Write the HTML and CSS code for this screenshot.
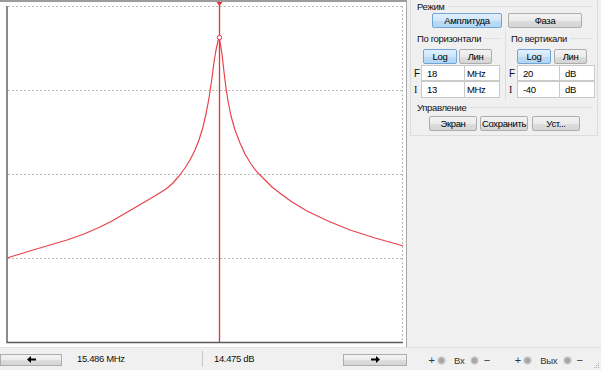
FILE: index.html
```html
<!DOCTYPE html>
<html>
<head>
    <meta charset="utf-8">
    <title>АЧХ</title>
    <link rel="stylesheet" href="styles.css">
</head>
<body>
    <div class="app">
        <div class="plot">
            <svg class="chart" width="406" height="345" viewBox="0 2 406 345">
                <g class="grid">
                    <line x1="8" y1="6.5" x2="402" y2="6.5"/>
                    <line x1="8" y1="90.5" x2="402" y2="90.5"/>
                    <line x1="8" y1="174.5" x2="402" y2="174.5"/>
                    <line x1="8" y1="258.5" x2="402" y2="258.5"/>
                    <line x1="402.5" y1="6" x2="402.5" y2="342"/>
                </g>
                <path class="axis-line" d="M7 6 V342.5 H403"/>
                <line class="marker" x1="219.5" y1="2" x2="219.5" y2="342"/>
                <path class="marker-head" d="M216.5 2 H222.5 L219.5 6 Z"/>
                <polyline class="curve" points="7,258 20,254 33,250 50,245 67,240 84,234 100,227 112,221 124,214 136,207 148,200 158,194 166,189 173,183 179,176 185,168 190,160 195,150 199,140 203,127 206,114 209,98 212,78 214,62 216,50 218,41 219,38 220,42 222,54 224,72 226,88 228,101 231,116 235,130 240,143 245,154 251,164 257,172 264,179 272,187 281,194 292,202 307,211 328,221 350,230 375,238 400,245 403,246"/>
                <circle class="peak" cx="219.5" cy="37.5" r="2.2"/>
            </svg>
        </div>

        <div class="side">
            <div class="panel">
                <div class="legend">Режим</div>
                <div class="mode-row">
                    <button class="btn on amp">Амплитуда</button>
                    <button class="btn phase">Фаза</button>
                </div>

                <div class="axes">
                    <div class="axis">
                        <div class="legend">По горизонтали</div>
                        <div class="scale-row">
                            <button class="btn on sc">Log</button>
                            <button class="btn sc">Лин</button>
                        </div>
                        <div class="field-row">
                            <span class="fl">F</span>
                            <input class="val" value="18">
                            <input class="unit" value="MHz">
                        </div>
                        <div class="field-row">
                            <span class="fl serif">I</span>
                            <input class="val" value="13">
                            <input class="unit" value="MHz">
                        </div>
                    </div>
                    <div class="axis right">
                        <div class="legend">По вертикали</div>
                        <div class="scale-row">
                            <button class="btn on sc">Log</button>
                            <button class="btn sc">Лин</button>
                        </div>
                        <div class="field-row">
                            <span class="fl">F</span>
                            <input class="val" value="20">
                            <input class="unit" value="dB">
                        </div>
                        <div class="field-row">
                            <span class="fl serif">I</span>
                            <input class="val" value="-40">
                            <input class="unit" value="dB">
                        </div>
                    </div>
                </div>

                <div class="legend">Управление</div>
                <div class="ctrl-row">
                    <button class="btn ctl">Экран</button>
                    <button class="btn ctl">Сохранить</button>
                    <button class="btn ctl">Уст...</button>
                </div>
            </div>
        </div>

        <div class="status">
            <button class="btn nav left">
                <svg width="9" height="7" viewBox="0 0 9 7"><path d="M0 3.5 L4 0 V2.5 H9 V4.5 H4 V7 Z"/></svg>
            </button>
            <div class="cell first">15.486 MHz</div>
            <div class="cell second">14.475 dB</div>
            <button class="btn nav right">
                <svg width="9" height="7" viewBox="0 0 9 7"><path d="M9 3.5 L5 0 V2.5 H0 V4.5 H5 V7 Z"/></svg>
            </button>
            <div class="knobs">
                <span class="sign">+</span><span class="knob"></span><span class="kl">Вх</span><span class="knob"></span><span class="sign">−</span>
            </div>
            <div class="knobs out">
                <span class="sign">+</span><span class="knob"></span><span class="kl">Вых</span><span class="knob"></span><span class="sign">−</span>
            </div>
            <svg class="grip" width="7" height="7" viewBox="0 0 7 7">
                <rect x="5" y="1" width="1" height="1"/>
                <rect x="3" y="3" width="1" height="1"/>
                <rect x="5" y="3" width="1" height="1"/>
                <rect x="1" y="5" width="1" height="1"/>
                <rect x="3" y="5" width="1" height="1"/>
                <rect x="5" y="5" width="1" height="1"/>
            </svg>
        </div>
    </div>
</body>
</html>
```

FILE: styles.css
```css
body {
    margin: 0;
    background-color: #f0f0f0;
    font-family: "Liberation Sans", Arial, sans-serif;
    font-size: 9.5px;
    letter-spacing: -0.35px;
    color: #111;
}
.app {
    display: grid;
    grid-template-columns: 408px 193px;
    grid-template-rows: 347px 23px;
    width: 601px;
    height: 370px;
    overflow: hidden;
}
.plot {
    background-color: #fff;
    border-top: 2px solid #9c9c9c;
    border-right: 1px solid #a8a8a8;
    width: 406px;
    height: 345px;
}
.chart {
    display: block;
}
.grid line {
    stroke: #b9b9b9;
    stroke-width: 1;
    stroke-dasharray: 2 2;
}
.axis-line {
    fill: none;
    stroke: #5a5a5a;
    stroke-width: 1.4;
}
.marker {
    stroke: #e5323b;
    stroke-width: 1.3;
}
.marker-head {
    fill: #e5323b;
}
.curve {
    fill: none;
    stroke: #e8434b;
    stroke-width: 1.2;
    stroke-linejoin: round;
}
.peak {
    fill: #fff;
    stroke: #e5323b;
    stroke-width: 1;
}

/* right panel */
.side {
    padding: 0 3px 0 2px;
}
.panel {
    height: 136px;
    box-sizing: border-box;
    border: 1px solid #dcdcdc;
    border-top: none;
    display: flex;
    flex-direction: column;
}
.legend {
    display: flex;
    align-items: center;
    height: 12px;
    padding-left: 6px;
    white-space: nowrap;
}
.legend::after {
    content: "";
    flex: 1;
    border-top: 1px solid #dedede;
    margin: 1px 4px 0 3px;
}
.btn {
    font: inherit;
    letter-spacing: inherit;
    color: #000;
    height: 15px;
    padding: 0;
    margin: 0;
    box-sizing: border-box;
    border: 1px solid #adadad;
    border-radius: 2px;
    background: linear-gradient(#f3f3f3, #ebebeb 50%, #dedede 51%, #d4d4d4);
    line-height: 13px;
}
.btn.on {
    border-color: #6fa6d6;
    background: linear-gradient(#e2f0fc, #cfe6fa 50%, #bcdcf6 51%, #b2d6f4);
}
.mode-row {
    display: flex;
    gap: 6px;
    margin: 1px 0 0 21px;
}
.amp {
    width: 70px;
}
.phase {
    width: 74px;
}
.axes {
    display: grid;
    grid-template-columns: 94px 1fr;
    margin-top: 4px;
    height: 68px;
}
.axis.right {
    border-left: 1px solid #dcdcdc;
}
.axis .legend {
    padding-left: 6px;
}
.axis.right .legend {
    padding-left: 5px;
}
.scale-row {
    display: flex;
    gap: 2px;
    margin: 5px 0 0 12px;
}
.axis.right .scale-row {
    margin-left: 11px;
    gap: 3px;
}
.sc {
    width: 34px;
}
.sc + .sc {
    width: 33px;
}
.field-row {
    display: flex;
    align-items: center;
    height: 16px;
    padding-left: 3px;
}
.scale-row + .field-row {
    margin-top: 1px;
}
.axis.right .field-row {
    padding-left: 3px;
}
.fl {
    width: 7px;
    font-size: 10px;
}
.fl.serif {
    font-family: "Liberation Serif", serif;
}
.val, .unit {
    font: inherit;
    letter-spacing: inherit;
    color: #000;
    height: 16px;
    box-sizing: border-box;
    border: 1px solid #c9c9c9;
    background-color: #fff;
    margin: 0;
    padding: 0 0 0 5px;
}
.val {
    width: 44px;
}
.axis.right .val {
    width: 43px;
}
.axis.right .fl {
    width: 8px;
}
.unit {
    width: 36px;
    margin-left: -1px;
    padding-left: 2px;
}
.axis.right .unit {
    padding-left: 5px;
}
.field-row + .field-row .val,
.field-row + .field-row .unit {
    height: 17px;
}
.axes + .legend {
    margin-top: 1px;
}
.ctrl-row {
    display: flex;
    gap: 3px;
    margin: 3px 0 0 18px;
}
.ctl {
    width: 48px;
}
.ctl:last-child {
    margin-left: 1px;
}

/* bottom bar */
.status {
    grid-column: 1 / -1;
    display: flex;
    align-items: center;
    border-top: 1px solid #e2e2e2;
    position: relative;
}
.nav {
    height: 12px;
    border-radius: 0;
    display: flex;
    align-items: center;
    justify-content: center;
}
.nav svg {
    fill: #000;
}
.nav.left {
    width: 62px;
    margin-top: 1px;
}
.nav.right {
    width: 64px;
    margin-left: 1px;
    margin-top: 1px;
}
.cell {
    height: 16px;
    line-height: 16px;
    box-sizing: border-box;
}
.cell.first {
    width: 141px;
    padding-left: 15px;
    border-right: 1px solid #c6c6c6;
}
.cell.second {
    width: 139px;
    padding-left: 11px;
}
.knobs {
    display: flex;
    align-items: center;
    margin-left: 21px;
    margin-top: 2px;
    color: #333;
}
.knobs.out {
    margin-left: 24px;
}
.sign {
    width: 7px;
    text-align: center;
    font-size: 11px;
}
.knob {
    width: 9px;
    height: 9px;
    border-radius: 50%;
    margin: 0 4px 0 2px;
    background: radial-gradient(circle, #a7a7a7 0 2.5px, #c9c9c9 3.2px, #e0e0e0 4.5px);
}
.kl {
    margin: 0 4px 0 4px;
}
.grip {
    position: absolute;
    right: 1px;
    bottom: 1px;
    fill: #a9a9a9;
}
```
